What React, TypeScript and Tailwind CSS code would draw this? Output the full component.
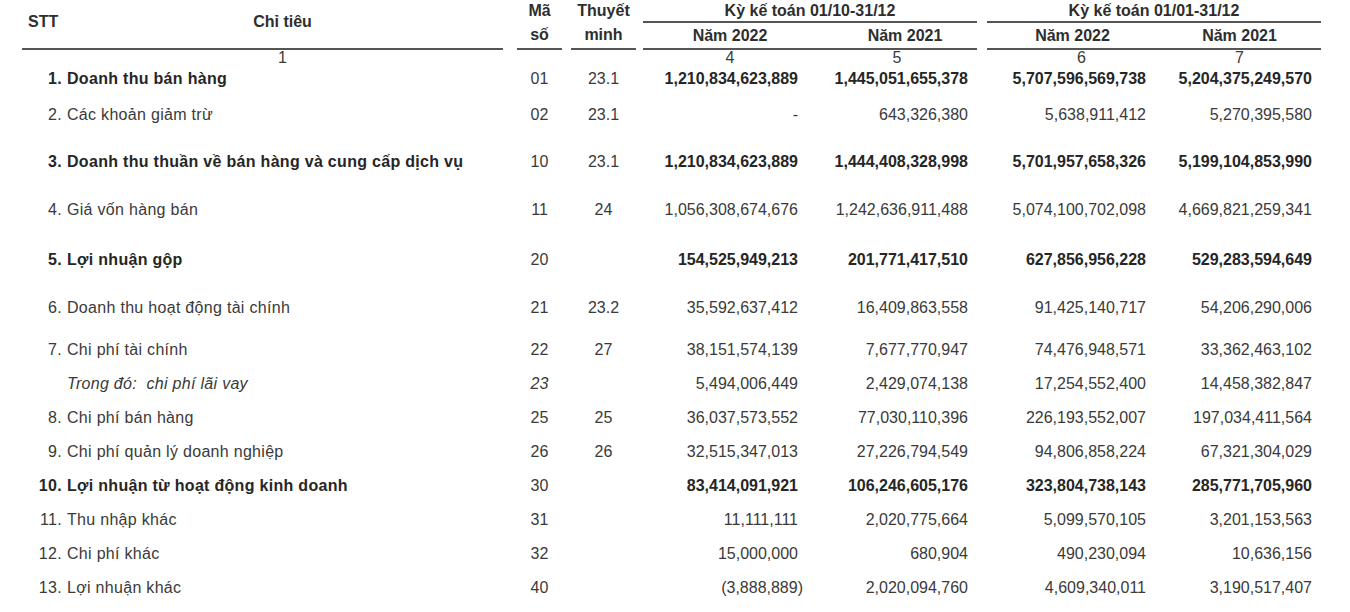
import React from 'react'

type Row = {
  n: string
  label: string
  ma: string
  tm?: string
  v: string[]
  bold?: boolean
  italic?: boolean
  mt: string
}

const rows: Row[] = [
  { n: '1.', label: 'Doanh thu bán hàng', ma: '01', tm: '23.1', v: ['1,210,834,623,889', '1,445,051,655,378', '5,707,596,569,738', '5,204,375,249,570'], bold: true, mt: 'mt-[3px]' },
  { n: '2.', label: 'Các khoản giảm trừ', ma: '02', tm: '23.1', v: ['-', '643,326,380', '5,638,911,412', '5,270,395,580'], mt: 'mt-[16px]' },
  { n: '3.', label: 'Doanh thu thuần về bán hàng và cung cấp dịch vụ', ma: '10', tm: '23.1', v: ['1,210,834,623,889', '1,444,408,328,998', '5,701,957,658,326', '5,199,104,853,990'], bold: true, mt: 'mt-[27px]' },
  { n: '4.', label: 'Giá vốn hàng bán', ma: '11', tm: '24', v: ['1,056,308,674,676', '1,242,636,911,488', '5,074,100,702,098', '4,669,821,259,341'], mt: 'mt-[28px]' },
  { n: '5.', label: 'Lợi nhuận gộp', ma: '20', v: ['154,525,949,213', '201,771,417,510', '627,856,956,228', '529,283,594,649'], bold: true, mt: 'mt-[30px]' },
  { n: '6.', label: 'Doanh thu hoạt động tài chính', ma: '21', tm: '23.2', v: ['35,592,637,412', '16,409,863,558', '91,425,140,717', '54,206,290,006'], mt: 'mt-[28px]' },
  { n: '7.', label: 'Chi phí tài chính', ma: '22', tm: '27', v: ['38,151,574,139', '7,677,770,947', '74,476,948,571', '33,362,463,102'], mt: 'mt-[22px]' },
  { n: '', label: 'Trong đó:  chi phí lãi vay', ma: '23', v: ['5,494,006,449', '2,429,074,138', '17,254,552,400', '14,458,382,847'], italic: true, mt: 'mt-[14px]' },
  { n: '8.', label: 'Chi phí bán hàng', ma: '25', tm: '25', v: ['36,037,573,552', '77,030,110,396', '226,193,552,007', '197,034,411,564'], mt: 'mt-[14px]' },
  { n: '9.', label: 'Chi phí quản lý doanh nghiệp', ma: '26', tm: '26', v: ['32,515,347,013', '27,226,794,549', '94,806,858,224', '67,321,304,029'], mt: 'mt-[14px]' },
  { n: '10.', label: 'Lợi nhuận từ hoạt động kinh doanh', ma: '30', v: ['83,414,091,921', '106,246,605,176', '323,804,738,143', '285,771,705,960'], bold: true, mt: 'mt-[14px]' },
  { n: '11.', label: 'Thu nhập khác', ma: '31', v: ['11,111,111', '2,020,775,664', '5,099,570,105', '3,201,153,563'], mt: 'mt-[14px]' },
  { n: '12.', label: 'Chi phí khác', ma: '32', v: ['15,000,000', '680,904', '490,230,094', '10,636,156'], mt: 'mt-[14px]' },
  { n: '13.', label: 'Lợi nhuận khác', ma: '40', v: ['(3,888,889)', '2,020,094,760', '4,609,340,011', '3,190,517,407'], mt: 'mt-[14px]' },
]

// right padding of each amount column
const valCls = ['w-[174px] pr-[19px]', 'w-[160px] pr-[9px]', 'ml-[10px] w-[171px] pr-[12px]', 'w-[163px] pr-[9px]']

function Amount({ value }: { value: string }) {
  // accounting negatives: the closing paren hangs past the digits
  if (value.startsWith('(')) return <span className="mr-[-5px]">{value}</span>
  return <span>{value}</span>
}

export default function App() {
  return (
    <div className="w-[1350px] h-[612px] overflow-hidden bg-white font-['Liberation_Sans',Arial,sans-serif] text-[16px] text-[#3a3a3a]">
      {/* header */}
      <div className="flex pl-[22px] font-bold text-[#2e2e2e]">
        <div className="flex w-[481px] h-[50px] border-b-2 border-[#555] pt-[13px] leading-[18px]">
          <div className="w-[40px] pl-[6px]">STT</div>
          <div className="flex-1 text-center">Chỉ tiêu</div>
        </div>
        <div className="ml-[14px] w-[45px] h-[50px] border-b-2 border-[#555] text-center">
          <div className="h-[22px] leading-[22px]">Mã</div>
          <div className="h-[26px] leading-[26px]">số</div>
        </div>
        <div className="ml-[9px] w-[65px] h-[50px] border-b-2 border-[#555] text-center">
          <div className="h-[22px] leading-[22px]">Thuyết</div>
          <div className="h-[26px] leading-[26px]">minh</div>
        </div>
        <div className="ml-[7px] w-[334px]">
          <div className="h-[23px] border-b-2 border-[#555] text-center leading-[21px]">Kỳ kế toán 01/10-31/12</div>
          <div className="flex h-[27px] border-b-2 border-[#555] leading-[25px]">
            <div className="w-[174px] text-center">Năm 2022</div>
            <div className="w-[160px] pl-[16px] text-center">Năm 2021</div>
          </div>
        </div>
        <div className="ml-[10px] w-[334px]">
          <div className="h-[23px] border-b-2 border-[#555] text-center leading-[21px]">Kỳ kế toán 01/01-31/12</div>
          <div className="flex h-[27px] border-b-2 border-[#555] leading-[25px]">
            <div className="w-[171px] text-center">Năm 2022</div>
            <div className="w-[163px] text-center">Năm 2021</div>
          </div>
        </div>
      </div>

      {/* column numbers */}
      <div className="flex pl-[22px] h-[16px] leading-[16px]">
        <div className="w-[40px]" />
        <div className="w-[441px] text-center">1</div>
        <div className="ml-[14px] w-[45px]" />
        <div className="ml-[9px] w-[65px]" />
        <div className="ml-[7px] w-[174px] text-center">4</div>
        <div className="w-[160px] text-center">5</div>
        <div className="ml-[10px] w-[171px] pl-[18px] text-center">6</div>
        <div className="w-[163px] text-center">7</div>
      </div>

      {/* body */}
      {rows.map((r) => (
        <div
          key={r.ma}
          className={`flex pl-[22px] h-[20px] leading-[20px] whitespace-pre ${r.mt} ${r.bold ? 'font-bold text-[#262626]' : ''}`}
        >
          <div className={`flex w-[481px] ${r.italic ? 'italic' : ''}`}>
            <span className="w-[40px] text-right tracking-[0.3px]">{r.n}</span>
            <span className="ml-[5px] tracking-[0.3px]">{r.label}</span>
          </div>
          <div className={`ml-[14px] w-[45px] text-center font-normal text-[#3a3a3a] ${r.italic ? 'italic' : ''}`}>{r.ma}</div>
          <div className="ml-[9px] w-[65px] text-center font-normal text-[#3a3a3a]">{r.tm ?? ''}</div>
          <div className="ml-[7px] flex">
            {r.v.map((x, i) => (
              <div key={i} className={`text-right ${valCls[i]}`}>
                <Amount value={x} />
              </div>
            ))}
          </div>
        </div>
      ))}
    </div>
  )
}
